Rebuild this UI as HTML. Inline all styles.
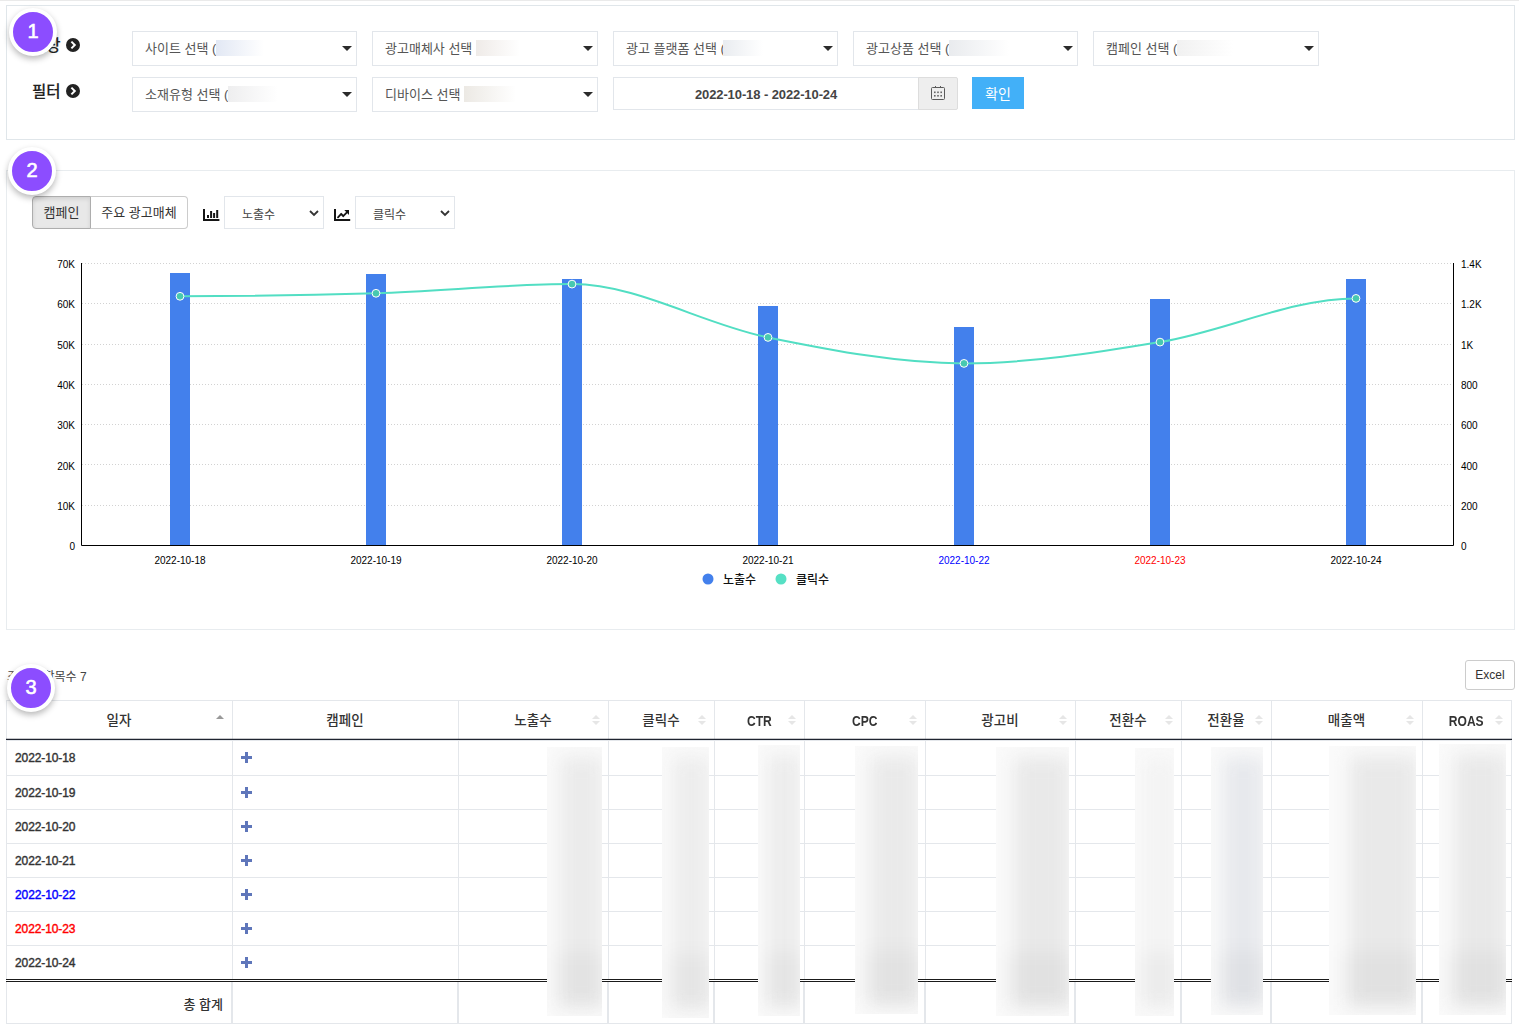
<!DOCTYPE html>
<html lang="ko">
<head>
<meta charset="utf-8">
<title>광고 리포트</title>
<style>
*{box-sizing:border-box;margin:0;padding:0}
html,body{width:1519px;height:1031px;overflow:hidden;background:#fff}
body{position:relative;font-family:"Liberation Sans","Noto Sans CJK KR",sans-serif;color:#333;font-size:13px}
.abs{position:absolute}
.panel{position:absolute;left:6px;width:1509px;border:1px solid #dde3e8;background:#fff}
.badge{position:absolute;width:48px;height:48px;border-radius:50%;background:#8c4dff;border:4px solid #fff;box-shadow:0 3px 6px rgba(0,0,0,.28);color:#fff;font-size:20px;-webkit-text-stroke:.6px #fff;line-height:38px;text-align:center;z-index:5}
.lbl{position:absolute;font-weight:500;-webkit-text-stroke:.15px #222;font-size:15.5px;line-height:20px;color:#222;white-space:nowrap}
.ico-c{position:absolute;width:14px;height:14px}
.sel{position:absolute;width:225px;height:35px;border:1px solid #e2e6eb;background:#fff;font-size:13px;line-height:33px;padding-left:12px;color:#555;white-space:nowrap;overflow:hidden}
.sel i{position:absolute;right:4px;top:14px;width:0;height:0;border-left:5px solid transparent;border-right:5px solid transparent;border-top:5px solid #2b2b2b}
.sel b{display:inline-block;vertical-align:middle;height:16px;margin-left:0;margin-top:-3px}
.csel{width:100px;height:33px;border:1px solid #e2e6eb;background:#fff;font-size:12px;line-height:37px;padding-left:17px;color:#444;overflow:hidden}
.csel svg{position:absolute;right:4px;top:12.5px}
.th{height:37px;line-height:38px;text-align:center;font-size:13.5px;font-weight:500;color:#333;white-space:nowrap}
.th.lat{font-weight:bold;font-size:14px}
.th.lat span{display:inline-block;transform:scaleX(.86)}
.tri-u,.tri-d{width:0;height:0;border-left:4px solid transparent;border-right:4px solid transparent}
.tri-u{border-bottom:4.5px solid #e6e6e6}
.tri-d{border-top:4.5px solid #e6e6e6}
.td{height:34px;line-height:34px;font-size:12px;letter-spacing:-.1px;font-weight:normal;-webkit-text-stroke:.4px currentColor;color:#333;white-space:nowrap}
.tot{height:34px;line-height:34px;font-size:13px;font-weight:500;color:#333;text-align:right;white-space:nowrap}
.blob{background:#fafafa;overflow:hidden}
.blob::before{content:"";position:absolute;left:24%;right:-1px;top:10px;bottom:8px;background:var(--c);filter:blur(9px)}
.blob::after{content:"";position:absolute;left:14%;right:-4px;bottom:10px;height:54px;background:rgba(0,0,0,.03);filter:blur(9px)}
</style>
</head>
<body>
<div class="abs" style="left:0;top:0;width:1519px;height:1px;background:#eaeaea"></div>

<!-- PANEL 1 : filters -->
<div class="panel" style="top:5px;height:135px;border-color:#e0e6ea"></div>
<div class="badge" style="left:9px;top:8px">1</div>
<div class="lbl" style="left:32px;top:36px">대상</div>
<div class="lbl" style="left:32px;top:82px">필터</div>
<svg class="ico-c" style="left:66px;top:38px" viewBox="0 0 14 14"><circle cx="7" cy="7" r="7" fill="#222"/><path d="M5.4 3.6 L8.8 7 L5.4 10.4" fill="none" stroke="#fff" stroke-width="2"/></svg>
<svg class="ico-c" style="left:66px;top:84px" viewBox="0 0 14 14"><circle cx="7" cy="7" r="7" fill="#222"/><path d="M5.4 3.6 L8.8 7 L5.4 10.4" fill="none" stroke="#fff" stroke-width="2"/></svg>

<div class="sel" style="left:132px;top:31px">사이트 선택 (<b style="width:48px;background:linear-gradient(90deg,#e2e8f4,#fff)"></b><i></i></div>
<div class="sel" style="left:372px;top:31px;width:226px">광고매체사 선택 <b style="width:44px;background:linear-gradient(90deg,#efebe8,#fff)"></b><i></i></div>
<div class="sel" style="left:613px;top:31px">광고 플랫폼 선택 (<b style="width:40px;margin-left:-2px;background:linear-gradient(90deg,#e9ecf0,#fff)"></b><i></i></div>
<div class="sel" style="left:853px;top:31px">광고상품 선택 (<b style="width:60px;background:linear-gradient(90deg,#e9ebee,#fff)"></b><i></i></div>
<div class="sel" style="left:1093px;top:31px;width:226px">캠페인 선택 (<b style="width:56px;background:linear-gradient(90deg,#f1f1f1,#fff)"></b><i></i></div>
<div class="sel" style="left:132px;top:77px">소재유형 선택 (<b style="width:50px;background:linear-gradient(90deg,#eeeeef,#fff)"></b><i></i></div>
<div class="sel" style="left:372px;top:77px;width:226px">디바이스 선택 <b style="width:52px;background:linear-gradient(90deg,#ece9e4,#fff)"></b><i></i></div>

<div class="abs" style="left:613px;top:77px;width:306px;height:33px;border:1px solid #e2e6eb;font-size:13px;letter-spacing:-.1px;font-weight:bold;color:#444;text-align:center;line-height:34px">2022-10-18 - 2022-10-24</div>
<div class="abs" style="left:918px;top:77px;width:40px;height:33px;border:1px solid #ddd;background:#eee;border-radius:0 2px 2px 0">
<svg class="abs" style="left:11px;top:7px" width="16" height="16" viewBox="0 0 16 16"><rect x="1.5" y="2.5" width="13" height="12" rx="1" fill="none" stroke="#5a5a5a" stroke-width="1"/><path d="M5.5 1v2M10.5 1v2" stroke="#5a5a5a" stroke-width="1"/><g fill="#666"><rect x="4" y="6.5" width="1.6" height="1.6"/><rect x="7.2" y="6.5" width="1.6" height="1.6"/><rect x="10.4" y="6.5" width="1.6" height="1.6"/><rect x="4" y="10" width="1.6" height="1.6"/><rect x="7.2" y="10" width="1.6" height="1.6"/><rect x="10.4" y="10" width="1.6" height="1.6"/></g></svg>
</div>
<div class="abs" style="left:972px;top:77px;width:52px;height:32px;background:#42b0f8;color:#fff;font-size:14px;text-align:center;line-height:35px;overflow:hidden">확인</div>

<!-- PANEL 2 : chart -->
<div class="panel" style="top:170px;height:460px;border-color:#e8ecef"></div>
<div class="badge" style="left:8px;top:147px">2</div>
<div class="abs" style="left:32px;top:196px;width:59px;height:33px;border:1px solid #adadad;border-radius:4px 0 0 4px;background:#e8e8e8;box-shadow:inset 0 2px 4px rgba(0,0,0,.1);font-size:13px;line-height:31px;text-align:center;color:#333">캠페인</div>
<div class="abs" style="left:90px;top:196px;width:98px;height:33px;border:1px solid #ccc;border-left:1px solid #adadad;border-radius:0 4px 4px 0;background:#fff;font-size:13px;line-height:31px;text-align:center;color:#333">주요 광고매체</div>
<svg class="abs" style="left:203px;top:209px" width="17" height="12" viewBox="0 0 17 12"><g fill="#151515"><rect x="0" y="0" width="2" height="12"/><rect x="0" y="10" width="16.4" height="2"/><rect x="4" y="6" width="2" height="3"/><rect x="7.1" y="2" width="2" height="7"/><rect x="10.1" y="4" width="2" height="5"/><rect x="13.2" y="1" width="2" height="8"/></g></svg>
<div class="abs csel" style="left:224px;top:196px">노출수<svg width="10" height="7" viewBox="0 0 10 7"><path d="M1 1L5 5L9 1" fill="none" stroke="#333" stroke-width="1.8"/></svg></div>
<svg class="abs" style="left:334px;top:209px" width="17" height="12" viewBox="0 0 17 12"><g fill="#151515"><rect x="0" y="0" width="2" height="12"/><rect x="0" y="10" width="16.2" height="2"/><path d="M10.3 1.1H15V5.9Z"/></g><path d="M4 8.3L7.2 4.8L9.2 7.2L13.4 2.8" fill="none" stroke="#151515" stroke-width="1.8" stroke-linecap="round" stroke-linejoin="round"/></svg>
<div class="abs csel" style="left:355px;top:196px">클릭수<svg width="10" height="7" viewBox="0 0 10 7"><path d="M1 1L5 5L9 1" fill="none" stroke="#333" stroke-width="1.8"/></svg></div>
<svg class="abs" style="left:0;top:240px" width="1519" height="380" viewBox="0 240 1519 380" font-family="Liberation Sans, Arial, sans-serif" font-size="10">
<line x1="82" x2="1453" y1="263.5" y2="263.5" stroke="#d2d2d2" stroke-width="1" stroke-dasharray="1 2"/>
<line x1="82" x2="1453" y1="303.5" y2="303.5" stroke="#d2d2d2" stroke-width="1" stroke-dasharray="1 2"/>
<line x1="82" x2="1453" y1="344.5" y2="344.5" stroke="#d2d2d2" stroke-width="1" stroke-dasharray="1 2"/>
<line x1="82" x2="1453" y1="384.5" y2="384.5" stroke="#d2d2d2" stroke-width="1" stroke-dasharray="1 2"/>
<line x1="82" x2="1453" y1="424.5" y2="424.5" stroke="#d2d2d2" stroke-width="1" stroke-dasharray="1 2"/>
<line x1="82" x2="1453" y1="464.5" y2="464.5" stroke="#d2d2d2" stroke-width="1" stroke-dasharray="1 2"/>
<line x1="82" x2="1453" y1="505.5" y2="505.5" stroke="#d2d2d2" stroke-width="1" stroke-dasharray="1 2"/>
<rect x="170" y="273" width="20" height="272" fill="#4380ec"/>
<rect x="366" y="274" width="20" height="271" fill="#4380ec"/>
<rect x="562" y="279" width="20" height="266" fill="#4380ec"/>
<rect x="758" y="306" width="20" height="239" fill="#4380ec"/>
<rect x="954" y="327" width="20" height="218" fill="#4380ec"/>
<rect x="1150" y="299" width="20" height="246" fill="#4380ec"/>
<rect x="1346" y="279" width="20" height="266" fill="#4380ec"/>
<path d="M81.5 263V545.5H1453.5V263" fill="none" stroke="#000" stroke-width="1"/>
<text x="75" y="268.0" text-anchor="end" fill="#000">70K</text>
<text x="1461" y="268.0" fill="#000">1.4K</text>
<text x="75" y="308.3" text-anchor="end" fill="#000">60K</text>
<text x="1461" y="308.3" fill="#000">1.2K</text>
<text x="75" y="348.6" text-anchor="end" fill="#000">50K</text>
<text x="1461" y="348.6" fill="#000">1K</text>
<text x="75" y="388.9" text-anchor="end" fill="#000">40K</text>
<text x="1461" y="388.9" fill="#000">800</text>
<text x="75" y="429.2" text-anchor="end" fill="#000">30K</text>
<text x="1461" y="429.2" fill="#000">600</text>
<text x="75" y="469.5" text-anchor="end" fill="#000">20K</text>
<text x="1461" y="469.5" fill="#000">400</text>
<text x="75" y="509.8" text-anchor="end" fill="#000">10K</text>
<text x="1461" y="509.8" fill="#000">200</text>
<text x="75" y="550.1" text-anchor="end" fill="#000">0</text>
<text x="1461" y="550.1" fill="#000">0</text>
<text x="180" y="563.5" text-anchor="middle" fill="#000">2022-10-18</text>
<text x="376" y="563.5" text-anchor="middle" fill="#000">2022-10-19</text>
<text x="572" y="563.5" text-anchor="middle" fill="#000">2022-10-20</text>
<text x="768" y="563.5" text-anchor="middle" fill="#000">2022-10-21</text>
<text x="964" y="563.5" text-anchor="middle" fill="#0000ff">2022-10-22</text>
<text x="1160" y="563.5" text-anchor="middle" fill="#ff0000">2022-10-23</text>
<text x="1356" y="563.5" text-anchor="middle" fill="#000">2022-10-24</text>
<path d="M180 296.3 C245.3 296.3 310.7 295.3 376 293.3 C441.3 291.3 506.7 284.1 572 284.1 C637.3 284.1 702.7 324.2 768 337.4 C833.3 350.6 898.7 363.4 964 363.4 C1029.3 363.4 1094.7 352.9 1160 342.1 C1225.3 331.3 1290.7 298.4 1356 298.4" fill="none" stroke="#52dec3" stroke-width="2" stroke-linecap="round"/>
<circle cx="180" cy="296.3" r="3.9" fill="#47c9b0" stroke="#fff" stroke-width="1"/>
<circle cx="376" cy="293.3" r="3.9" fill="#47c9b0" stroke="#fff" stroke-width="1"/>
<circle cx="572" cy="284.1" r="3.9" fill="#47c9b0" stroke="#fff" stroke-width="1"/>
<circle cx="768" cy="337.4" r="3.9" fill="#47c9b0" stroke="#fff" stroke-width="1"/>
<circle cx="964" cy="363.4" r="3.9" fill="#47c9b0" stroke="#fff" stroke-width="1"/>
<circle cx="1160" cy="342.1" r="3.9" fill="#47c9b0" stroke="#fff" stroke-width="1"/>
<circle cx="1356" cy="298.4" r="3.9" fill="#47c9b0" stroke="#fff" stroke-width="1"/>
<circle cx="708" cy="579" r="5.5" fill="#4380ec"/><circle cx="781" cy="579" r="5.5" fill="#56e0c4"/>
<text x="723" y="583.5" font-family="Liberation Sans, Noto Sans CJK KR, sans-serif" font-size="12" font-weight="500" fill="#111">노출수</text>
<text x="796" y="583.5" font-family="Liberation Sans, Noto Sans CJK KR, sans-serif" font-size="12" font-weight="500" fill="#111">클릭수</text>
</svg>

<!-- SECTION 3 : table -->
<div class="badge" style="left:7px;top:664px">3</div>
<!--TABLE-START-->
<div class="abs" style="left:7px;top:669px;font-size:12px;line-height:16px;color:#444;white-space:nowrap">조회된 항목수 7</div>
<div class="abs" style="left:1465px;top:660px;width:50px;height:30px;border:1px solid #ccc;border-radius:3px;background:#fff;font-size:12px;line-height:29px;text-align:center;color:#333">Excel</div>
<div class="abs" style="left:6px;top:700px;width:1506px;height:1px;background:#e4e7eb"></div>
<div class="abs" style="left:6px;top:775px;width:1506px;height:1px;background:#e4e7eb"></div>
<div class="abs" style="left:6px;top:809px;width:1506px;height:1px;background:#e4e7eb"></div>
<div class="abs" style="left:6px;top:843px;width:1506px;height:1px;background:#e4e7eb"></div>
<div class="abs" style="left:6px;top:877px;width:1506px;height:1px;background:#e4e7eb"></div>
<div class="abs" style="left:6px;top:911px;width:1506px;height:1px;background:#e4e7eb"></div>
<div class="abs" style="left:6px;top:945px;width:1506px;height:1px;background:#e4e7eb"></div>
<div class="abs" style="left:6px;top:1023px;width:1506px;height:1px;background:#e4e7eb"></div>
<div class="abs" style="left:6px;top:700px;width:1px;height:324px;background:#e4e7eb"></div>
<div class="abs" style="left:232px;top:700px;width:1px;height:324px;background:#e4e7eb"></div>
<div class="abs" style="left:458px;top:700px;width:1px;height:324px;background:#e4e7eb"></div>
<div class="abs" style="left:608px;top:700px;width:1px;height:324px;background:#e4e7eb"></div>
<div class="abs" style="left:714px;top:700px;width:1px;height:324px;background:#e4e7eb"></div>
<div class="abs" style="left:804px;top:700px;width:1px;height:324px;background:#e4e7eb"></div>
<div class="abs" style="left:925px;top:700px;width:1px;height:324px;background:#e4e7eb"></div>
<div class="abs" style="left:1075px;top:700px;width:1px;height:324px;background:#e4e7eb"></div>
<div class="abs" style="left:1181px;top:700px;width:1px;height:324px;background:#e4e7eb"></div>
<div class="abs" style="left:1271px;top:700px;width:1px;height:324px;background:#e4e7eb"></div>
<div class="abs" style="left:1422px;top:700px;width:1px;height:324px;background:#e4e7eb"></div>
<div class="abs" style="left:1511px;top:700px;width:1px;height:324px;background:#e4e7eb"></div>
<div class="abs" style="left:6px;top:739px;width:1506px;height:1px;background:#1f2430;box-shadow:0 -1px 0 rgba(31,36,48,.25)"></div>
<div class="abs" style="left:6px;top:740px;width:1506px;height:1px;background:#e4e7eb"></div>
<div class="abs" style="left:6px;top:979px;width:1506px;height:3px;border-top:1px solid #1a1a1a;border-bottom:1px solid #1a1a1a;background:#fff"></div>
<div class="abs" style="left:231px;top:982px;width:2px;height:41px;background:#e4e7eb"></div>
<div class="abs" style="left:457px;top:982px;width:2px;height:41px;background:#e4e7eb"></div>
<div class="abs" style="left:607px;top:982px;width:2px;height:41px;background:#e4e7eb"></div>
<div class="abs" style="left:713px;top:982px;width:2px;height:41px;background:#e4e7eb"></div>
<div class="abs" style="left:803px;top:982px;width:2px;height:41px;background:#e4e7eb"></div>
<div class="abs" style="left:924px;top:982px;width:2px;height:41px;background:#e4e7eb"></div>
<div class="abs" style="left:1074px;top:982px;width:2px;height:41px;background:#e4e7eb"></div>
<div class="abs" style="left:1180px;top:982px;width:2px;height:41px;background:#e4e7eb"></div>
<div class="abs" style="left:1270px;top:982px;width:2px;height:41px;background:#e4e7eb"></div>
<div class="abs" style="left:1421px;top:982px;width:2px;height:41px;background:#e4e7eb"></div>
<div class="abs th" style="left:6px;top:702px;width:226px">일자</div>
<div class="abs tri-u" style="left:216px;top:715px;border-bottom-color:#999"></div>
<div class="abs th" style="left:232px;top:702px;width:226px">캠페인</div>
<div class="abs th" style="left:458px;top:702px;width:150px">노출수</div>
<div class="abs tri-u" style="left:592px;top:715px"></div>
<div class="abs tri-d" style="left:592px;top:721px"></div>
<div class="abs th" style="left:608px;top:702px;width:106px">클릭수</div>
<div class="abs tri-u" style="left:698px;top:715px"></div>
<div class="abs tri-d" style="left:698px;top:721px"></div>
<div class="abs th lat" style="left:714px;top:702px;width:90px"><span>CTR</span></div>
<div class="abs tri-u" style="left:788px;top:715px"></div>
<div class="abs tri-d" style="left:788px;top:721px"></div>
<div class="abs th lat" style="left:804px;top:702px;width:121px"><span>CPC</span></div>
<div class="abs tri-u" style="left:909px;top:715px"></div>
<div class="abs tri-d" style="left:909px;top:721px"></div>
<div class="abs th" style="left:925px;top:702px;width:150px">광고비</div>
<div class="abs tri-u" style="left:1059px;top:715px"></div>
<div class="abs tri-d" style="left:1059px;top:721px"></div>
<div class="abs th" style="left:1075px;top:702px;width:106px">전환수</div>
<div class="abs tri-u" style="left:1165px;top:715px"></div>
<div class="abs tri-d" style="left:1165px;top:721px"></div>
<div class="abs th" style="left:1181px;top:702px;width:90px">전환율</div>
<div class="abs tri-u" style="left:1255px;top:715px"></div>
<div class="abs tri-d" style="left:1255px;top:721px"></div>
<div class="abs th" style="left:1271px;top:702px;width:151px">매출액</div>
<div class="abs tri-u" style="left:1406px;top:715px"></div>
<div class="abs tri-d" style="left:1406px;top:721px"></div>
<div class="abs th lat" style="left:1422px;top:702px;width:89px"><span>ROAS</span></div>
<div class="abs tri-u" style="left:1495px;top:715px"></div>
<div class="abs tri-d" style="left:1495px;top:721px"></div>
<div class="abs td" style="left:15px;top:741px;color:#333">2022-10-18</div>
<svg class="abs" style="left:241px;top:752px" width="11" height="11" viewBox="0 0 11 11"><path d="M5.5 0V11M0 5.5H11" stroke="#5f76ba" stroke-width="3"/></svg>
<div class="abs td" style="left:15px;top:776px;color:#333">2022-10-19</div>
<svg class="abs" style="left:241px;top:787px" width="11" height="11" viewBox="0 0 11 11"><path d="M5.5 0V11M0 5.5H11" stroke="#5f76ba" stroke-width="3"/></svg>
<div class="abs td" style="left:15px;top:810px;color:#333">2022-10-20</div>
<svg class="abs" style="left:241px;top:821px" width="11" height="11" viewBox="0 0 11 11"><path d="M5.5 0V11M0 5.5H11" stroke="#5f76ba" stroke-width="3"/></svg>
<div class="abs td" style="left:15px;top:844px;color:#333">2022-10-21</div>
<svg class="abs" style="left:241px;top:855px" width="11" height="11" viewBox="0 0 11 11"><path d="M5.5 0V11M0 5.5H11" stroke="#5f76ba" stroke-width="3"/></svg>
<div class="abs td" style="left:15px;top:878px;color:#0000ff">2022-10-22</div>
<svg class="abs" style="left:241px;top:889px" width="11" height="11" viewBox="0 0 11 11"><path d="M5.5 0V11M0 5.5H11" stroke="#5f76ba" stroke-width="3"/></svg>
<div class="abs td" style="left:15px;top:912px;color:#ff0000">2022-10-23</div>
<svg class="abs" style="left:241px;top:923px" width="11" height="11" viewBox="0 0 11 11"><path d="M5.5 0V11M0 5.5H11" stroke="#5f76ba" stroke-width="3"/></svg>
<div class="abs td" style="left:15px;top:946px;color:#333">2022-10-24</div>
<svg class="abs" style="left:241px;top:957px" width="11" height="11" viewBox="0 0 11 11"><path d="M5.5 0V11M0 5.5H11" stroke="#5f76ba" stroke-width="3"/></svg>
<div class="abs tot" style="left:6px;width:217px;top:988px">총 합계</div>
<div class="abs blob" style="left:547px;top:747px;width:55px;height:269px;--c:#ebebeb"></div>
<div class="abs blob" style="left:662px;top:747px;width:47px;height:271px;--c:#ededed"></div>
<div class="abs blob" style="left:758px;top:745px;width:42px;height:271px;--c:#ececec"></div>
<div class="abs blob" style="left:855px;top:746px;width:63px;height:268px;--c:#eaeaea"></div>
<div class="abs blob" style="left:996px;top:747px;width:73px;height:269px;--c:#e9e9e9"></div>
<div class="abs blob" style="left:1135px;top:748px;width:39px;height:268px;--c:#f3f3f3"></div>
<div class="abs blob" style="left:1211px;top:747px;width:52px;height:268px;--c:#e7e9ed"></div>
<div class="abs blob" style="left:1329px;top:746px;width:87px;height:269px;--c:#e9e9e9"></div>
<div class="abs blob" style="left:1439px;top:744px;width:67px;height:271px;--c:#e9e9e9"></div>
<!--TABLE-END-->
</body>
</html>
